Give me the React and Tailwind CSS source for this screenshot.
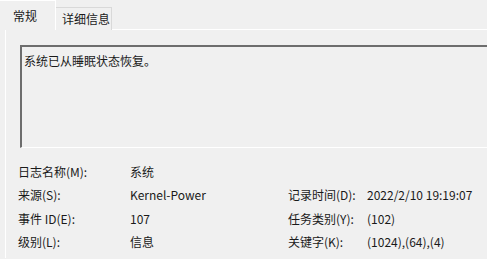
import React from 'react';

const font = { fontFamily: '"Microsoft YaHei UI", "Noto Sans CJK SC", "Noto Sans", sans-serif' };

function Row({ label, value }) {
  return (
    <div className="flex h-[23.5px] items-center">
      <span className="w-[112px] shrink-0">{label}</span>
      <span>{value}</span>
    </div>
  );
}

export default function App() {
  return (
    <div className="w-[487px] h-[259px] overflow-hidden bg-[#f0f0f0] text-[12px] text-[#1a1a1a]" style={font}>
      {/* tabs */}
      <div className="flex items-end h-[30px]">
        <div className="h-[30px] w-[56px] pl-[13px] pt-[6px] border-t border-r border-white bg-[#f0f0f0] relative z-10">
          常规
        </div>
        <div className="h-[23px] w-[56px] pl-[6px] pt-[2px] border-t border-r border-[#d9d9d9] bg-[#f0f0f0]">
          详细信息
        </div>
      </div>

      {/* panel */}
      <div className="ml-[5px] border-l border-t border-white h-[229px] -mt-px pt-[15px] pl-[14px]">
        <div className="h-[103px] border-l-2 border-t-2 border-[#6d6d6d] border-b border-b-white pl-[2px] pt-[5px] text-[12px]" style={{ fontFamily: '"Noto Sans CJK SC", sans-serif' }}>
          系统已从睡眠状态恢复。
        </div>

        <div className="mt-[12px] flex text-[12px]">
          <div className="w-[270px] -ml-[2px]">
            <Row label="日志名称(M):" value="系统" />
            <Row label="来源(S):" value="Kernel-Power" />
            <Row label="事件 ID(E):" value="107" />
            <Row label="级别(L):" value="信息" />
          </div>
          <div>
            <div className="h-[23.5px]" />
            <div className="flex h-[23.5px] items-center">
              <span className="w-[79px] shrink-0">记录时间(D):</span>
              <span>2022/2/10 19:19:07</span>
            </div>
            <div className="flex h-[23.5px] items-center">
              <span className="w-[79px] shrink-0">任务类别(Y):</span>
              <span>(102)</span>
            </div>
            <div className="flex h-[23.5px] items-center">
              <span className="w-[79px] shrink-0">关键字(K):</span>
              <span>(1024),(64),(4)</span>
            </div>
          </div>
        </div>
      </div>
    </div>
  );
}
